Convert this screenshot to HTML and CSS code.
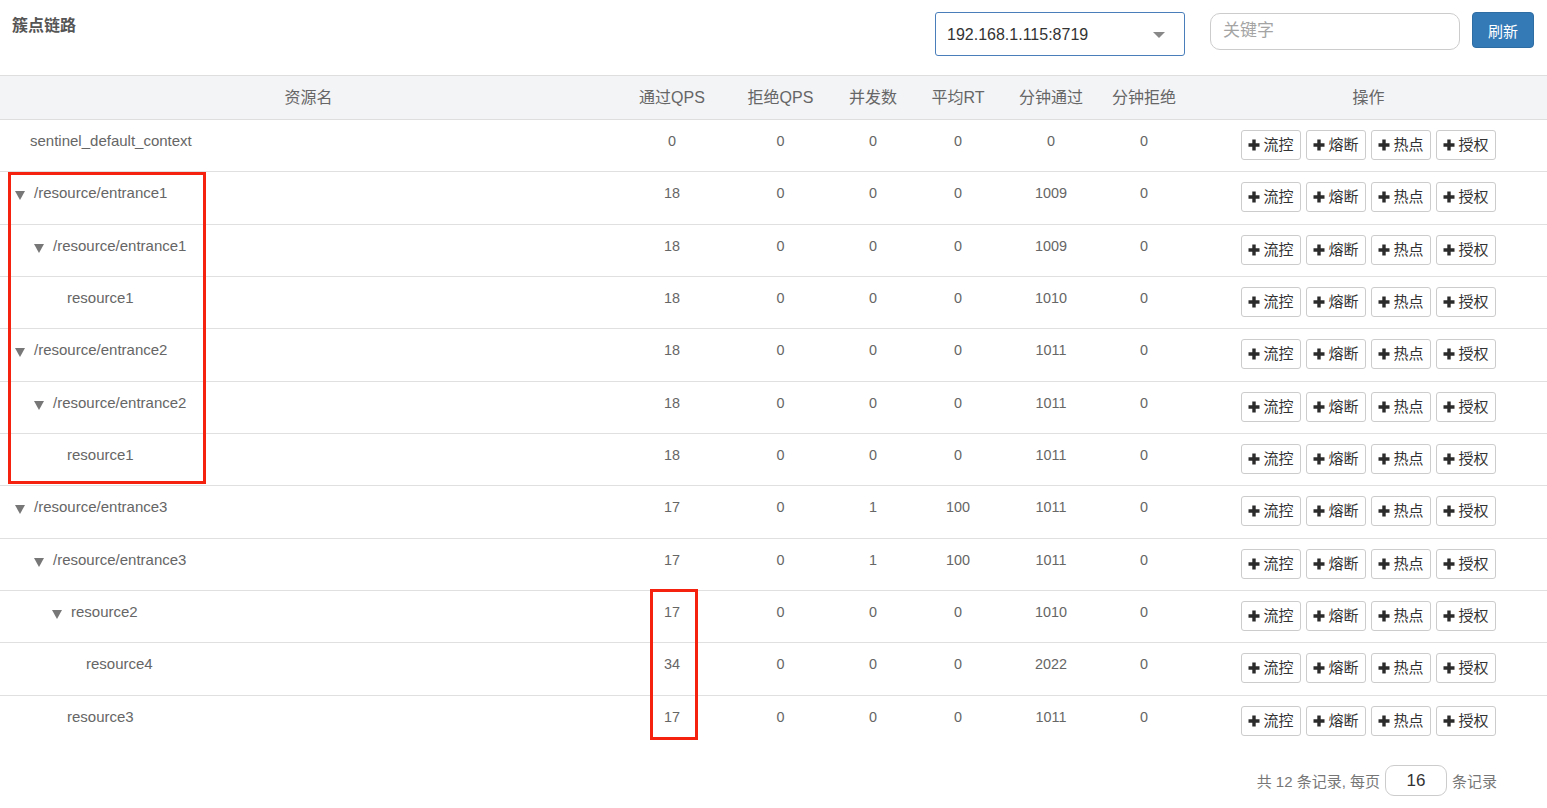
FILE: index.html
```html
<!DOCTYPE html>
<html lang="zh-CN">
<head>
<meta charset="utf-8">
<title>簇点链路</title>
<link rel="stylesheet" href="styles.css">
</head>
<body>
<div class="page">
  <div class="topbar">
    <div class="title">簇点链路</div>
    <div class="controls">
      <div class="select"><span>192.168.1.115:8719</span><i class="sel-caret"></i></div>
      <div class="search">关键字</div>
      <button class="btn-primary">刷新</button>
    </div>
  </div>

  <table class="grid">
    <colgroup>
      <col class="c-name"><col class="c-qps"><col class="c-rej"><col class="c-conc"><col class="c-rt"><col class="c-mp"><col class="c-mr"><col class="c-ops">
    </colgroup>
    <thead>
      <tr><th>资源名</th><th>通过QPS</th><th>拒绝QPS</th><th>并发数</th><th>平均RT</th><th>分钟通过</th><th>分钟拒绝</th><th>操作</th></tr>
    </thead>
    <tbody>
      <tr><td class="name l1"><span class="leaf"></span>sentinel_default_context</td><td>0</td><td>0</td><td>0</td><td>0</td><td>0</td><td>0</td><td class="ops"><div class="btns"><span class="b"><svg viewBox="0 0 12 12"><path d="M6 0.5v11M0.5 6h11"/></svg>流控</span><span class="b"><svg viewBox="0 0 12 12"><path d="M6 0.5v11M0.5 6h11"/></svg>熔断</span><span class="b"><svg viewBox="0 0 12 12"><path d="M6 0.5v11M0.5 6h11"/></svg>热点</span><span class="b"><svg viewBox="0 0 12 12"><path d="M6 0.5v11M0.5 6h11"/></svg>授权</span></div></td></tr>
      <tr><td class="name l1"><i class="tri"></i>/resource/entrance1</td><td>18</td><td>0</td><td>0</td><td>0</td><td>1009</td><td>0</td><td class="ops"><div class="btns"><span class="b"><svg viewBox="0 0 12 12"><path d="M6 0.5v11M0.5 6h11"/></svg>流控</span><span class="b"><svg viewBox="0 0 12 12"><path d="M6 0.5v11M0.5 6h11"/></svg>熔断</span><span class="b"><svg viewBox="0 0 12 12"><path d="M6 0.5v11M0.5 6h11"/></svg>热点</span><span class="b"><svg viewBox="0 0 12 12"><path d="M6 0.5v11M0.5 6h11"/></svg>授权</span></div></td></tr>
      <tr><td class="name l2"><i class="tri"></i>/resource/entrance1</td><td>18</td><td>0</td><td>0</td><td>0</td><td>1009</td><td>0</td><td class="ops"><div class="btns"><span class="b"><svg viewBox="0 0 12 12"><path d="M6 0.5v11M0.5 6h11"/></svg>流控</span><span class="b"><svg viewBox="0 0 12 12"><path d="M6 0.5v11M0.5 6h11"/></svg>熔断</span><span class="b"><svg viewBox="0 0 12 12"><path d="M6 0.5v11M0.5 6h11"/></svg>热点</span><span class="b"><svg viewBox="0 0 12 12"><path d="M6 0.5v11M0.5 6h11"/></svg>授权</span></div></td></tr>
      <tr><td class="name l3"><span class="leaf"></span>resource1</td><td>18</td><td>0</td><td>0</td><td>0</td><td>1010</td><td>0</td><td class="ops"><div class="btns"><span class="b"><svg viewBox="0 0 12 12"><path d="M6 0.5v11M0.5 6h11"/></svg>流控</span><span class="b"><svg viewBox="0 0 12 12"><path d="M6 0.5v11M0.5 6h11"/></svg>熔断</span><span class="b"><svg viewBox="0 0 12 12"><path d="M6 0.5v11M0.5 6h11"/></svg>热点</span><span class="b"><svg viewBox="0 0 12 12"><path d="M6 0.5v11M0.5 6h11"/></svg>授权</span></div></td></tr>
      <tr><td class="name l1"><i class="tri"></i>/resource/entrance2</td><td>18</td><td>0</td><td>0</td><td>0</td><td>1011</td><td>0</td><td class="ops"><div class="btns"><span class="b"><svg viewBox="0 0 12 12"><path d="M6 0.5v11M0.5 6h11"/></svg>流控</span><span class="b"><svg viewBox="0 0 12 12"><path d="M6 0.5v11M0.5 6h11"/></svg>熔断</span><span class="b"><svg viewBox="0 0 12 12"><path d="M6 0.5v11M0.5 6h11"/></svg>热点</span><span class="b"><svg viewBox="0 0 12 12"><path d="M6 0.5v11M0.5 6h11"/></svg>授权</span></div></td></tr>
      <tr><td class="name l2"><i class="tri"></i>/resource/entrance2</td><td>18</td><td>0</td><td>0</td><td>0</td><td>1011</td><td>0</td><td class="ops"><div class="btns"><span class="b"><svg viewBox="0 0 12 12"><path d="M6 0.5v11M0.5 6h11"/></svg>流控</span><span class="b"><svg viewBox="0 0 12 12"><path d="M6 0.5v11M0.5 6h11"/></svg>熔断</span><span class="b"><svg viewBox="0 0 12 12"><path d="M6 0.5v11M0.5 6h11"/></svg>热点</span><span class="b"><svg viewBox="0 0 12 12"><path d="M6 0.5v11M0.5 6h11"/></svg>授权</span></div></td></tr>
      <tr><td class="name l3"><span class="leaf"></span>resource1</td><td>18</td><td>0</td><td>0</td><td>0</td><td>1011</td><td>0</td><td class="ops"><div class="btns"><span class="b"><svg viewBox="0 0 12 12"><path d="M6 0.5v11M0.5 6h11"/></svg>流控</span><span class="b"><svg viewBox="0 0 12 12"><path d="M6 0.5v11M0.5 6h11"/></svg>熔断</span><span class="b"><svg viewBox="0 0 12 12"><path d="M6 0.5v11M0.5 6h11"/></svg>热点</span><span class="b"><svg viewBox="0 0 12 12"><path d="M6 0.5v11M0.5 6h11"/></svg>授权</span></div></td></tr>
      <tr><td class="name l1"><i class="tri"></i>/resource/entrance3</td><td>17</td><td>0</td><td>1</td><td>100</td><td>1011</td><td>0</td><td class="ops"><div class="btns"><span class="b"><svg viewBox="0 0 12 12"><path d="M6 0.5v11M0.5 6h11"/></svg>流控</span><span class="b"><svg viewBox="0 0 12 12"><path d="M6 0.5v11M0.5 6h11"/></svg>熔断</span><span class="b"><svg viewBox="0 0 12 12"><path d="M6 0.5v11M0.5 6h11"/></svg>热点</span><span class="b"><svg viewBox="0 0 12 12"><path d="M6 0.5v11M0.5 6h11"/></svg>授权</span></div></td></tr>
      <tr><td class="name l2"><i class="tri"></i>/resource/entrance3</td><td>17</td><td>0</td><td>1</td><td>100</td><td>1011</td><td>0</td><td class="ops"><div class="btns"><span class="b"><svg viewBox="0 0 12 12"><path d="M6 0.5v11M0.5 6h11"/></svg>流控</span><span class="b"><svg viewBox="0 0 12 12"><path d="M6 0.5v11M0.5 6h11"/></svg>熔断</span><span class="b"><svg viewBox="0 0 12 12"><path d="M6 0.5v11M0.5 6h11"/></svg>热点</span><span class="b"><svg viewBox="0 0 12 12"><path d="M6 0.5v11M0.5 6h11"/></svg>授权</span></div></td></tr>
      <tr><td class="name l3"><i class="tri"></i>resource2</td><td>17</td><td>0</td><td>0</td><td>0</td><td>1010</td><td>0</td><td class="ops"><div class="btns"><span class="b"><svg viewBox="0 0 12 12"><path d="M6 0.5v11M0.5 6h11"/></svg>流控</span><span class="b"><svg viewBox="0 0 12 12"><path d="M6 0.5v11M0.5 6h11"/></svg>熔断</span><span class="b"><svg viewBox="0 0 12 12"><path d="M6 0.5v11M0.5 6h11"/></svg>热点</span><span class="b"><svg viewBox="0 0 12 12"><path d="M6 0.5v11M0.5 6h11"/></svg>授权</span></div></td></tr>
      <tr><td class="name l4"><span class="leaf"></span>resource4</td><td>34</td><td>0</td><td>0</td><td>0</td><td>2022</td><td>0</td><td class="ops"><div class="btns"><span class="b"><svg viewBox="0 0 12 12"><path d="M6 0.5v11M0.5 6h11"/></svg>流控</span><span class="b"><svg viewBox="0 0 12 12"><path d="M6 0.5v11M0.5 6h11"/></svg>熔断</span><span class="b"><svg viewBox="0 0 12 12"><path d="M6 0.5v11M0.5 6h11"/></svg>热点</span><span class="b"><svg viewBox="0 0 12 12"><path d="M6 0.5v11M0.5 6h11"/></svg>授权</span></div></td></tr>
      <tr class="last"><td class="name l3"><span class="leaf"></span>resource3</td><td>17</td><td>0</td><td>0</td><td>0</td><td>1011</td><td>0</td><td class="ops"><div class="btns"><span class="b"><svg viewBox="0 0 12 12"><path d="M6 0.5v11M0.5 6h11"/></svg>流控</span><span class="b"><svg viewBox="0 0 12 12"><path d="M6 0.5v11M0.5 6h11"/></svg>熔断</span><span class="b"><svg viewBox="0 0 12 12"><path d="M6 0.5v11M0.5 6h11"/></svg>热点</span><span class="b"><svg viewBox="0 0 12 12"><path d="M6 0.5v11M0.5 6h11"/></svg>授权</span></div></td></tr>
    </tbody>
  </table>

  <div class="pager">
    <span>共 12 条记录, 每页</span>
    <span class="pagesize">16</span>
    <span>条记录</span>
  </div>

  <div class="mark mark-a"></div>
  <div class="mark mark-b"></div>
</div>
</body>
</html>
```

FILE: styles.css
```css
* { box-sizing: border-box; }
html, body { margin: 0; padding: 0; background: #fff; }
body {
  font-family: "Liberation Sans", Arial, "Noto Sans CJK SC", sans-serif;
  color: #666;
  width: 1547px;
  height: 808px;
  overflow: hidden;
}
.page { position: relative; width: 1547px; height: 808px; }

.topbar {
  height: 75px;
  display: flex;
  justify-content: space-between;
  align-items: flex-start;
}
.title {
  font-size: 16px;
  font-weight: bold;
  color: #555;
  padding: 16px 0 0 12px;
  line-height: 20px;
}
.controls {
  display: flex;
  align-items: flex-start;
  padding-top: 12px;
  padding-right: 13px;
}
.select {
  width: 250px;
  height: 44px;
  border: 1px solid #4a7ebb;
  border-radius: 3px;
  display: flex;
  align-items: center;
  justify-content: space-between;
  padding: 0 19px 0 11px;
  font-size: 16px;
  color: #333;
}
.select span { padding-top: 1px; }
.sel-caret {
  width: 0; height: 0;
  border-left: 6px solid transparent;
  border-right: 6px solid transparent;
  border-top: 6px solid #888;
  margin-top: 1px;
}
.search {
  width: 250px;
  height: 37px;
  margin: 1px 0 0 25px;
  border: 1px solid #ccc;
  border-radius: 10px;
  padding: 0 12px;
  font-size: 17px;
  line-height: 34px;
  color: #a4a4a4;
}
.btn-primary {
  width: 62px;
  height: 36px;
  margin-left: 12px;
  background: #337ab7;
  border: 1px solid #2e6da4;
  border-radius: 4px;
  color: #fff;
  font-family: inherit;
  font-size: 15px;
  padding: 0;
}

.grid {
  width: 100%;
  border-collapse: collapse;
  table-layout: fixed;
}
.c-name { width: 617px; }
.c-qps { width: 110px; }
.c-rej { width: 107px; }
.c-conc { width: 78px; }
.c-rt { width: 92px; }
.c-mp { width: 94px; }
.c-mr { width: 92px; }
.c-ops { width: 357px; }

.grid thead tr {
  background: #f3f4f6;
  border-top: 1px solid #dedede;
  border-bottom: 1px solid #dedede;
}
.grid th {
  height: 44px;
  font-weight: normal;
  font-size: 16px;
  color: #666;
  text-align: center;
  vertical-align: middle;
  padding: 0 0 3px 0;
}
.grid tbody tr {
  height: 52.33px;
  border-bottom: 1px solid #e0e0e0;
}
.grid tbody tr.last { border-bottom: none; }
.grid td {
  font-size: 14.4px;
  line-height: 20px;
  text-align: center;
  vertical-align: top;
  padding: 11px 0 0 0;
  color: #666;
  white-space: nowrap;
}
.grid td.name {
  text-align: left;
  font-size: 15px;
}
.grid td.l1 { padding-left: 15px; }
.grid td.l2 { padding-left: 34px; }
.grid td.l3 { padding-left: 52px; }
.grid td.l4 { padding-left: 71px; }
.leaf { display: inline-block; width: 15px; }
.tri {
  display: inline-block;
  width: 0; height: 0;
  border-left: 5px solid transparent;
  border-right: 5px solid transparent;
  border-top: 9px solid #777;
  margin-right: 9px;
  vertical-align: -2px;
}
.grid td.ops { padding-top: 10px; }
.btns {
  display: flex;
  justify-content: center;
  gap: 5px;
}
.b {
  display: inline-flex;
  align-items: center;
  justify-content: center;
  height: 30px;
  width: 60px;
  border: 1px solid #ccc;
  border-radius: 3px;
  font-size: 15px;
  color: #333;
  background: #fff;
}
.b svg {
  width: 12px;
  height: 12px;
  margin-right: 3px;
  stroke: #2b2b2b;
  stroke-width: 3.4;
  fill: none;
}

.pager {
  display: flex;
  justify-content: flex-end;
  align-items: center;
  padding: 18px 50px 0 0;
  font-size: 15px;
  color: #777;
}
.pagesize {
  width: 62px;
  height: 31px;
  margin: 0 5px;
  border: 1px solid #ccc;
  border-radius: 9px;
  text-align: center;
  line-height: 29px;
  font-size: 17px;
  color: #333;
}

.mark {
  position: absolute;
  border: 3px solid #f5220f;
  pointer-events: none;
}
.mark-a { left: 8px; top: 172px; width: 198px; height: 312px; }
.mark-b { left: 650px; top: 589px; width: 48px; height: 151px; }
```
